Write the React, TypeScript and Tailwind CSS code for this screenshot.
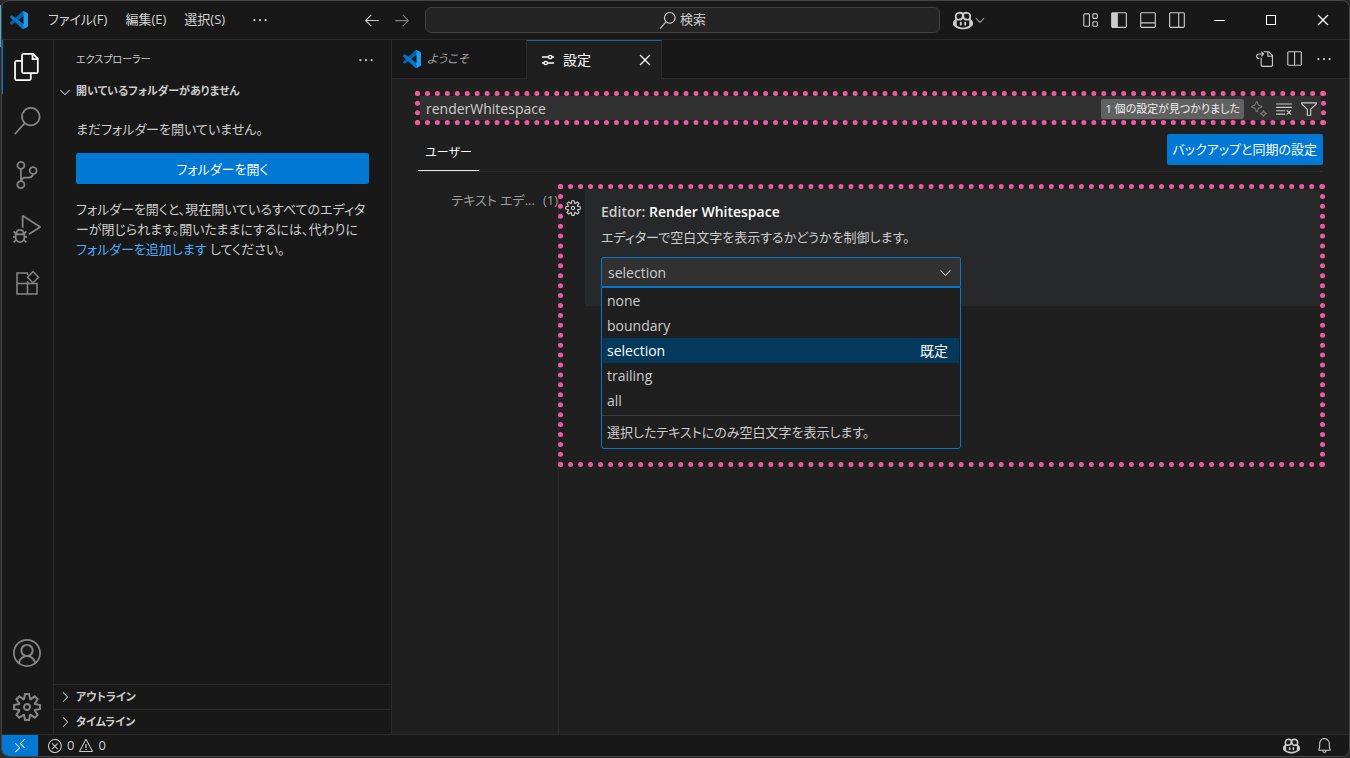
import type { ReactNode } from "react";
import {
  VscAccount,
  VscArrowLeft,
  VscArrowRight,
  VscBell,
  VscChevronDown,
  VscChevronRight,
  VscChromeClose,
  VscChromeMaximize,
  VscChromeMinimize,
  VscClearAll,
  VscCopilot,
  VscDebugAlt,
  VscEllipsis,
  VscError,
  VscFiles,
  VscFilter,
  VscGoToFile,
  VscLayout,
  VscLayoutPanelOff,
  VscLayoutSidebarLeft,
  VscLayoutSidebarRightOff,
  VscRemote,
  VscSearch,
  VscSettingsGear,
  VscGear,
  VscSourceControl,
  VscSparkle,
  VscSplitHorizontal,
  VscWarning,
} from "react-icons/vsc";

const options = ["none", "boundary", "selection", "trailing", "all"];

const Logo = () => (
  <svg viewBox="0 0 100 100" className="size-[18px] shrink-0">
    <path
      fill="#0065A9"
      d="M96.46 10.8L75.86.88C73.47-.27 70.62.21 68.75 2.08L1.3 63.58C-.52 65.24-.51 68.09 1.3 69.75L6.81 74.75C8.3 76.1 10.53 76.2 12.13 74.99L93.36 13.37C96.09 11.3 100 13.25 100 16.67V16.43C100 14.03 98.62 11.84 96.46 10.8Z"
    />
    <path
      fill="#007ACC"
      d="M96.46 89.2L75.86 99.12C73.47 100.27 70.62 99.79 68.75 97.92L1.3 36.42C-.52 34.76-.51 31.91 1.3 30.25L6.81 25.25C8.3 23.9 10.53 23.8 12.13 25.01L93.36 86.63C96.09 88.7 100 86.75 100 83.33V83.57C100 85.97 98.62 88.16 96.46 89.2Z"
    />
    <path
      fill="#1F9CF0"
      d="M75.86 99.13C73.47 100.27 70.62 99.79 68.75 97.92C71.06 100.22 75 98.59 75 95.33V4.67C75 1.41 71.06-.22 68.75 2.08C70.62.21 73.47-.27 75.86.87L96.46 10.78C98.62 11.82 100 14.01 100 16.41V83.59C100 85.99 98.62 88.18 96.46 89.22L75.86 99.13Z"
    />
  </svg>
);

// two sliders, used on the settings tab
const Sliders = () => (
  <svg viewBox="0 0 14 14" className="size-[14px]" fill="none" stroke="currentColor" strokeWidth="1.3">
    <path d="M1 4h6.5M11 4h2M1 10h2M6.5 10H13" />
    <circle cx="9.2" cy="4" r="1.7" />
    <circle cx="4.8" cy="10" r="1.7" />
  </svg>
);

// three joined squares with a tilted one at the top right
const Extensions = () => (
  <svg viewBox="0 0 28 28" className="size-7" fill="none" stroke="currentColor" strokeWidth="1.5">
    <path d="M15 4H4v21h20V14.5H4M14.5 12v13M14.5 4v2" />
    <path d="M20 2.5l5.5 5.8L20 14l-5.5-5.7z" />
  </svg>
);

const IconButton = ({ label, className = "", children }: { label: string; className?: string; children: ReactNode }) => (
  <button aria-label={label} className={`flex items-center justify-center ${className}`}>
    {children}
  </button>
);

const TitleBar = () => (
  <header className="flex h-[39px] shrink-0 items-center border-b border-[#2b2b2b] text-[#cccccc]">
    <div className="flex w-[423px] shrink-0 items-center pl-2">
      <Logo />
      <nav className="ml-5 flex flex-1 items-center gap-[18px] text-[13px] text-[#d4d4d4]">
        <button>ファイル(F)</button>
        <button>編集(E)</button>
        <button>選択(S)</button>
        <IconButton label="その他" className="ml-2">
          <VscEllipsis size={18} />
        </IconButton>
      </nav>
      <div className="flex gap-3 pr-[14px]">
        <IconButton label="戻る">
          <VscArrowLeft size={18} />
        </IconButton>
        <IconButton label="進む" className="text-[#7d7d7d]">
          <VscArrowRight size={18} />
        </IconButton>
      </div>
    </div>
    <button className="flex h-[26px] flex-1 items-center justify-center gap-1 rounded-md border border-[#424242] bg-[#242424] text-[13px]">
      <VscSearch size={17} />
      検索
    </button>
    <div className="flex w-[409px] shrink-0 items-center">
      <IconButton label="Copilot" className="ml-[13px]">
        <VscCopilot size={20} />
        <VscChevronDown size={14} />
      </IconButton>
      <div className="ml-auto flex items-center gap-[11px]">
        <IconButton label="レイアウトのカスタマイズ">
          <VscLayout size={18} />
        </IconButton>
        <IconButton label="サイドバー">
          <VscLayoutSidebarLeft size={18} />
        </IconButton>
        <IconButton label="パネル">
          <VscLayoutPanelOff size={18} />
        </IconButton>
        <IconButton label="セカンダリ サイドバー">
          <VscLayoutSidebarRightOff size={18} />
        </IconButton>
      </div>
      <div className="flex text-white">
        <IconButton label="最小化" className="ml-[7px] w-[52px]">
          <VscChromeMinimize size={16} />
        </IconButton>
        <IconButton label="最大化" className="w-[52px]">
          <VscChromeMaximize size={16} />
        </IconButton>
        <IconButton label="閉じる" className="w-[52px]">
          <VscChromeClose size={16} />
        </IconButton>
      </div>
    </div>
  </header>
);

const ActivityBar = () => (
  <aside className="flex w-[52px] shrink-0 flex-col border-r border-[#2b2b2b] text-[#868686]">
    <IconButton label="エクスプローラー" className="h-[54px] border-l border-[#0078d4] pr-[3px] text-white">
      <VscFiles size={28} />
    </IconButton>
    <IconButton label="検索" className="h-[54px] pr-[2px]">
      <VscSearch size={28} />
    </IconButton>
    <IconButton label="ソース管理" className="h-[54px] pr-[2px]">
      <VscSourceControl size={28} />
    </IconButton>
    <IconButton label="実行とデバッグ" className="h-[54px] pr-[2px]">
      <VscDebugAlt size={28} />
    </IconButton>
    <IconButton label="拡張機能" className="h-[54px] pr-[2px]">
      <Extensions />
    </IconButton>
    <IconButton label="アカウント" className="mt-auto h-[54px] pr-[2px]">
      <VscAccount size={28} />
    </IconButton>
    <IconButton label="管理" className="h-[54px] pr-[2px]">
      <VscSettingsGear size={28} />
    </IconButton>
  </aside>
);

const Sidebar = () => (
  <section className="flex w-[338px] shrink-0 flex-col border-r border-[#2b2b2b] text-[13px] text-[#cccccc]">
    <div className="flex h-[39px] items-center justify-between pr-4 pl-[22px]">
      <h2 className="text-[10px]">エクスプローラー</h2>
      <IconButton label="その他の操作">
        <VscEllipsis size={18} />
      </IconButton>
    </div>
    <button className="flex h-[25px] items-center gap-[3px] pl-[3px] text-[11px] font-bold">
      <VscChevronDown size={16} />
      開いているフォルダーがありません
    </button>
    <div className="flex flex-col px-[22px] leading-5">
      <p className="mt-[15px]">まだフォルダーを開いていません。</p>
      <button className="mt-[14px] h-[31px] rounded-[2px] bg-[#0078d4] text-white">フォルダーを開く</button>
      <p className="mt-[15px] break-all">
        フォルダーを開くと、現在開いているすべてのエディターが閉じられます。開いたままにするには、代わりに
        <a href="#" className="inline-block text-[#4daafc]">
          フォルダーを追加します
        </a>{" "}
        してください。
      </p>
    </div>
    <div className="mt-auto text-[11px] font-bold">
      <button className="flex h-[25px] w-full items-center gap-[3px] border-t border-[#2b2b2b] pl-[3px]">
        <VscChevronRight size={16} />
        アウトライン
      </button>
      <button className="flex h-[25px] w-full items-center gap-[3px] border-t border-[#2b2b2b] pl-[3px]">
        <VscChevronRight size={16} />
        タイムライン
      </button>
    </div>
  </section>
);

const Tabs = () => (
  <div className="flex h-[39px] shrink-0 bg-[#181818]">
    <button className="flex w-[135px] items-center gap-[6px] border-r border-b border-[#2b2b2b] pl-[11px] text-[12px] text-[#9d9d9d] italic">
      <Logo />
      ようこそ
    </button>
    <div className="flex w-[135px] items-center border-t border-r border-t-[#1b67a3] border-r-[#2b2b2b] bg-[#1f1f1f] pl-[14px] text-[14px] leading-5 text-white">
      <button className="flex items-center gap-2">
        <Sliders />
        設定
      </button>
      <IconButton label="タブを閉じる" className="mr-2 ml-auto">
        <VscChromeClose size={16} />
      </IconButton>
    </div>
    <div className="flex flex-1 items-center justify-end gap-3 border-b border-[#2b2b2b] pr-4 text-[#cccccc]">
      <IconButton label="設定 (JSON) を開く">
        <VscGoToFile size={18} />
      </IconButton>
      <IconButton label="エディターを分割">
        <VscSplitHorizontal size={18} />
      </IconButton>
      <IconButton label="その他の操作">
        <VscEllipsis size={18} />
      </IconButton>
    </div>
  </div>
);

const SearchBox = () => (
  <div className="mr-[23px] ml-[23px] flex h-[34px] items-center border-[5px] border-dotted border-[#ee5a9e] bg-[#313131] bg-clip-padding pt-px pr-[3px] pl-[6px] text-[#cccccc]">
    <input
      aria-label="設定の検索"
      defaultValue="renderWhitespace"
      className="min-w-0 flex-1 bg-transparent text-[14px] outline-none"
    />
    <span className="mr-[6px] rounded-[2px] bg-[#616161] px-1 text-[11px] leading-5 text-[#f0f0f0]">
      1 個の設定が見つかりました
    </span>
    <div className="flex gap-[7px]">
      <IconButton label="AI 検索" className="text-[#7a7a7a]">
        <VscSparkle size={18} />
      </IconButton>
      <IconButton label="検索をクリア">
        <VscClearAll size={18} />
      </IconButton>
      <IconButton label="フィルター">
        <VscFilter size={18} />
      </IconButton>
    </div>
  </div>
);

const RenderWhitespace = () => (
  <div className="ml-[22px] flex-1 bg-[#262829] pt-[13px] pr-4 pb-[19px] pl-4 text-[14px] text-[#cccccc]">
    <label htmlFor="render-whitespace" className="block leading-5 font-semibold">
      Editor: <span className="text-white">Render Whitespace</span>
    </label>
    <p className="mt-[5px] text-[13px] leading-5">エディターで空白文字を表示するかどうかを制御します。</p>
    <div className="relative mt-[10px] w-[360px]">
      <select
        id="render-whitespace"
        defaultValue="selection"
        className="block h-[30px] w-full appearance-none rounded-t-[2px] border border-[#0078d4] bg-[#313131] px-[6px]"
      >
        {options.map((name) => (
          <option key={name}>{name}</option>
        ))}
      </select>
      <VscChevronDown size={17} className="pointer-events-none absolute top-[7px] right-[7px]" />
      <div className="absolute top-full left-0 w-full rounded-b-[3px] border border-[#0078d4] bg-[#1f1f1f]">
        <ul role="listbox" aria-label="Render Whitespace" className="px-px pb-[2px]">
          {options.map((name) => (
            <li
              key={name}
              role="option"
              aria-selected={name === "selection"}
              className="flex h-[25px] items-center justify-between pr-[11px] pl-1 aria-selected:bg-[#04395e] aria-selected:text-white"
            >
              {name}
              {name === "selection" && <span>既定</span>}
            </li>
          ))}
        </ul>
        <p className="border-t border-[#3c3c3c] px-[5px] text-[13px] leading-8">
          選択したテキストにのみ空白文字を表示します。
        </p>
      </div>
    </div>
  </div>
);

const Editor = () => (
  <main className="flex min-w-0 flex-1 flex-col bg-[#1f1f1f]">
    <Tabs />
    <div className="flex flex-1 flex-col pt-3">
      <SearchBox />
      <div className="mr-[26px] ml-[26px] flex h-[47px] items-end justify-between border-b border-[#2b2b2b]">
        <button className="h-9 w-[61px] border-b border-[#e7e7e7] text-[12px] text-white">ユーザー</button>
        <button className="mb-[6px] h-[31px] rounded-[2px] bg-[#0078d4] px-[6px] text-[13px] text-white">
          バックアップと同期の設定
        </button>
      </div>
      <div className="flex flex-1 pt-3">
        <div className="flex w-[167px] shrink-0 justify-end gap-2 border-r border-[#2b2b2b] pt-[6px] text-[13px] leading-5 text-[#9d9d9d]">
          <a href="#">テキスト エデ...</a>
          <span>(1)</span>
        </div>
        <div className="mr-6 -ml-px flex h-[283px] flex-1 items-start border-[5px] border-dotted border-[#ee5a9e]">
          <IconButton label="その他の操作" className="-mr-[22px] mt-[10px] w-[22px] pr-[2px] text-[#cccccc]">
            <VscGear size={18} />
          </IconButton>
          <RenderWhitespace />
        </div>
      </div>
    </div>
  </main>
);

const StatusBar = () => (
  <footer className="flex h-[22px] shrink-0 items-center border-t border-[#2b2b2b] text-[13px] text-[#cccccc]">
    <IconButton label="リモート ウィンドウを開く" className="h-full w-9 bg-[#0078d4] text-white">
      <VscRemote size={16} />
    </IconButton>
    <button className="ml-[9px] flex items-center gap-1">
      <VscError size={16} />0
      <VscWarning size={16} />0
    </button>
    <div className="mr-4 ml-auto flex gap-4">
      <IconButton label="Copilot">
        <VscCopilot size={17} />
      </IconButton>
      <IconButton label="通知">
        <VscBell size={17} />
      </IconButton>
    </div>
  </footer>
);

export default function App() {
  return (
    <div className="flex h-screen bg-[#2a2a2a] pb-px font-['Open_Sans','Noto_Sans_CJK_JP',sans-serif] [font-feature-settings:'palt']">
      {/* sliver of the window behind */}
      <div className="mt-[5px] h-[42px] w-px bg-[#4aa9cf]" />
      <div className="flex h-full min-w-0 flex-1 flex-col overflow-hidden rounded-lg border border-[#454545] bg-[#181818]">
        <TitleBar />
        <div className="flex min-h-0 flex-1">
          <ActivityBar />
          <Sidebar />
          <Editor />
        </div>
        <StatusBar />
      </div>
    </div>
  );
}
